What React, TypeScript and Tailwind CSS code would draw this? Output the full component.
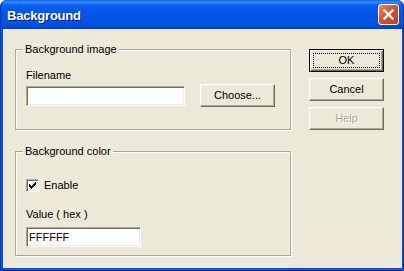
import type { ReactNode } from "react";

const FONT = "font-['Liberation_Sans',Arial,sans-serif] text-[11px] leading-[13px] text-black";

const SUNKEN =
  "border border-t-[#ACA899] border-l-[#ACA899] border-r-white border-b-white shadow-[inset_1px_1px_0_#716F64,inset_-1px_-1px_0_#F1EFE2] bg-white";

const RAISED =
  "border border-t-white border-l-white border-r-[#716F64] border-b-[#716F64] shadow-[inset_-1px_-1px_0_#ACA899,inset_1px_1px_0_#F1EFE2] bg-[#ECE9D8]";

function Button({ label, primary, disabled }: { label: string; primary?: boolean; disabled?: boolean }) {
  if (primary) {
    return (
      <div className="relative flex h-[23px] w-[75px] items-center justify-center border border-black bg-[#ECE9D8] shadow-[inset_1px_1px_0_#fff,inset_-1px_-1px_0_#716F64,inset_-2px_-2px_0_#ACA899]">
        <span>{label}</span>
        <span className="absolute inset-[3px] border border-dotted border-black" />
      </div>
    );
  }
  return (
    <div className={`flex h-[23px] w-[75px] items-center justify-center ${RAISED}`}>
      <span className={disabled ? "text-[#ACA899] [text-shadow:1px_1px_0_#fff]" : ""}>{label}</span>
    </div>
  );
}

function Group({ title, children, className }: { title: string; children: ReactNode; className: string }) {
  return (
    <fieldset
      className={`border border-[#ACA899] px-[10px] shadow-[inset_1px_1px_0_#fff,1px_1px_0_#fff] ${className}`}
    >
      <legend className="-ml-[3px] bg-[#ECE9D8] px-[2px] leading-[13px]">{title}</legend>
      {children}
    </fieldset>
  );
}

function Check() {
  return (
    <div className={`flex h-[13px] w-[13px] items-center justify-center ${SUNKEN}`}>
      <svg width="7" height="7" viewBox="0 0 7 7" shapeRendering="crispEdges">
        <path
          d="M6 0h1v3h-1zM5 1h1v3h-1zM4 2h1v3h-1zM3 3h1v3h-1zM2 4h1v3h-1zM1 3h1v3h-1zM0 2h1v3h-1z"
          fill="#000"
        />
      </svg>
    </div>
  );
}

export default function App() {
  return (
    <div className={`h-[271px] w-[404px] bg-white ${FONT}`}>
      <div className="flex h-full flex-col">
        <div className="flex h-[29px] shrink-0 items-center justify-between rounded-t-[7px] bg-[linear-gradient(to_bottom,#0A5FE6_0%,#3A8CFF_7%,#0A5CF0_18%,#0055E6_55%,#0052E2_85%,#003FCC_100%)] pl-[7px] pr-[5px] shadow-[inset_1px_0_0_#0030C8,inset_-1px_0_0_#0030C8]">
          <span className="pt-px font-['Liberation_Sans',Arial,sans-serif] text-[13px] font-bold tracking-[-0.2px] text-white [text-shadow:1px_1px_0_#0A1883]">
            Background
          </span>
          <div className="flex h-[21px] w-[21px] items-center justify-center rounded-[3px] border border-white bg-[linear-gradient(135deg,#E9896A_0%,#D9542F_45%,#C33A18_100%)]">
            <svg width="11" height="11" viewBox="0 0 11 11">
              <path d="M1.5 1.5L9.5 9.5M9.5 1.5L1.5 9.5" stroke="#fff" strokeWidth="2.4" strokeLinecap="square" />
            </svg>
          </div>
        </div>
        <div className="flex flex-1 bg-[#0855E4] pb-[3px] pl-[3px] pr-[2px] shadow-[inset_1px_0_0_#0030C8,inset_-1px_0_0_#0030C8,inset_0_-1px_0_#0022B0]">
          <div className="flex flex-1 bg-[#ECE9D8] pl-[12px] pt-[14px]">
            <div className="flex w-[276px] flex-col gap-[15px]">
              <Group title="Background image" className="pb-[22px] pt-[13px]">
                <div>Filename</div>
                <div className="mt-[2px] flex items-start">
                  <div className={`mt-[2px] h-[20px] w-[159px] ${SUNKEN}`} />
                  <div className="ml-[15px]">
                    <Button label="Choose..." />
                  </div>
                </div>
              </Group>
              <Group title="Background color" className="pb-[8px] pt-[21px]">
                <div className="flex h-[13px] items-center">
                  <Check />
                  <span className="ml-[5px]">Enable</span>
                </div>
                <div className="mt-[16px]">Value ( hex )</div>
                <div className={`mt-[6px] flex h-[20px] w-[115px] items-center pl-[2px] ${SUNKEN}`}>FFFFFF</div>
              </Group>
            </div>
            <div className="ml-[18px] mt-[6px] flex flex-col gap-[6px]">
              <Button label="OK" primary />
              <Button label="Cancel" />
              <Button label="Help" disabled />
            </div>
          </div>
        </div>
      </div>
    </div>
  );
}
